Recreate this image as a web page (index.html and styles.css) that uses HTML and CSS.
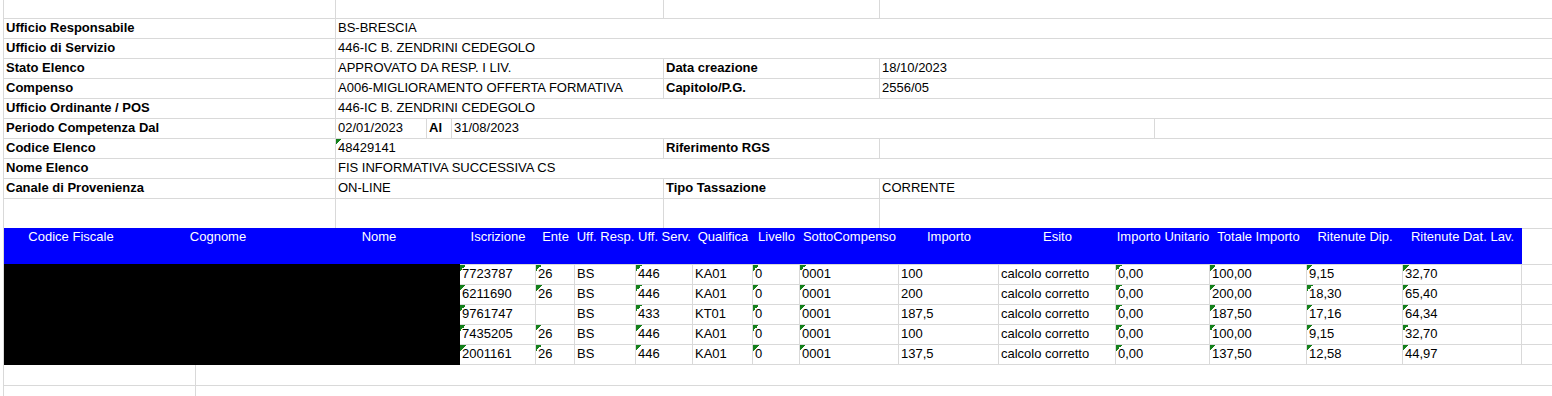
FILE: index.html
```html
<!DOCTYPE html>
<html lang="it">
<head>
<meta charset="utf-8">
<title>Elenco</title>
<link rel="stylesheet" href="styles.css">
</head>
<body>
<div class="sheet">
  <section class="info">
    <div class="row first"><div class="c lab"></div><div class="c val"></div><div class="c lab2"></div><div class="c fill"></div></div>
    <div class="row"><div class="c lab">Ufficio Responsabile</div><div class="c fill">BS-BRESCIA</div></div>
    <div class="row"><div class="c lab">Ufficio di Servizio</div><div class="c fill">446-IC B. ZENDRINI CEDEGOLO</div></div>
    <div class="row"><div class="c lab">Stato Elenco</div><div class="c val">APPROVATO DA RESP. I LIV.</div><div class="c lab2">Data creazione</div><div class="c fill val2">18/10/2023</div></div>
    <div class="row"><div class="c lab">Compenso</div><div class="c val">A006-MIGLIORAMENTO OFFERTA FORMATIVA</div><div class="c lab2">Capitolo/P.G.</div><div class="c fill val2">2556/05</div></div>
    <div class="row"><div class="c lab">Ufficio Ordinante / POS</div><div class="c fill">446-IC B. ZENDRINI CEDEGOLO</div></div>
    <div class="row"><div class="c lab">Periodo Competenza Dal</div><div class="c dal">02/01/2023</div><div class="c al">Al</div><div class="c alv">31/08/2023</div><div class="c fill"></div></div>
    <div class="row"><div class="c lab">Codice Elenco</div><div class="c val t">48429141</div><div class="c lab2">Riferimento RGS</div><div class="c fill"></div></div>
    <div class="row"><div class="c lab">Nome Elenco</div><div class="c fill">FIS INFORMATIVA SUCCESSIVA CS</div></div>
    <div class="row"><div class="c lab">Canale di Provenienza</div><div class="c val">ON-LINE</div><div class="c lab2">Tipo Tassazione</div><div class="c fill val2">CORRENTE</div></div>
    <div class="row spacer"><div class="c lab"></div><div class="c val"></div><div class="c lab2"></div><div class="c fill"></div></div>
  </section>

  <section class="grid">
    <div class="h">Codice Fiscale</div>
    <div class="h">Cognome</div>
    <div class="h">Nome</div>
    <div class="h">Iscrizione</div>
    <div class="h">Ente</div>
    <div class="h">Uff. Resp.</div>
    <div class="h">Uff. Serv.</div>
    <div class="h">Qualifica</div>
    <div class="h">Livello</div>
    <div class="h">SottoCompenso</div>
    <div class="h">Importo</div>
    <div class="h">Esito</div>
    <div class="h">Importo Unitario</div>
    <div class="h">Totale Importo</div>
    <div class="h">Ritenute Dip.</div>
    <div class="h">Ritenute Dat. Lav.</div>
    <div class="hfill"></div>

    <div class="redacted"></div>
    <div class="d t">7723787</div><div class="d t">26</div><div class="d">BS</div><div class="d t">446</div><div class="d">KA01</div><div class="d t">0</div><div class="d t">0001</div><div class="d">100</div><div class="d">calcolo corretto</div><div class="d t">0,00</div><div class="d t">100,00</div><div class="d t">9,15</div><div class="d t">32,70</div><div class="dfill"></div>

    <div class="d t">6211690</div><div class="d t">26</div><div class="d">BS</div><div class="d t">446</div><div class="d">KA01</div><div class="d t">0</div><div class="d t">0001</div><div class="d">200</div><div class="d">calcolo corretto</div><div class="d t">0,00</div><div class="d t">200,00</div><div class="d t">18,30</div><div class="d t">65,40</div><div class="dfill"></div>

    <div class="d t">9761747</div><div class="d"></div><div class="d">BS</div><div class="d t">433</div><div class="d">KT01</div><div class="d t">0</div><div class="d t">0001</div><div class="d">187,5</div><div class="d">calcolo corretto</div><div class="d t">0,00</div><div class="d t">187,50</div><div class="d t">17,16</div><div class="d t">64,34</div><div class="dfill"></div>

    <div class="d t">7435205</div><div class="d t">26</div><div class="d">BS</div><div class="d t">446</div><div class="d">KA01</div><div class="d t">0</div><div class="d t">0001</div><div class="d">100</div><div class="d">calcolo corretto</div><div class="d t">0,00</div><div class="d t">100,00</div><div class="d t">9,15</div><div class="d t">32,70</div><div class="dfill"></div>

    <div class="d last t">2001161</div><div class="d last t">26</div><div class="d last">BS</div><div class="d last t">446</div><div class="d last">KA01</div><div class="d last t">0</div><div class="d last t">0001</div><div class="d last">137,5</div><div class="d last">calcolo corretto</div><div class="d last t">0,00</div><div class="d last t">137,50</div><div class="d last t">12,58</div><div class="d last t">44,97</div><div class="dfill last"></div>
  </section>

  <section class="after">
    <div class="row arow"><div class="c short"></div><div class="c fill"></div></div>
    <div class="row arow2"><div class="c short"></div><div class="c fill"></div></div>
  </section>
</div>
</body>
</html>
```

FILE: styles.css
```css
* { box-sizing: border-box; }

html, body {
  margin: 0;
  padding: 0;
  background: #ffffff;
}

body {
  width: 1552px;
  height: 396px;
  overflow: hidden;
  font-family: "Liberation Sans", Arial, sans-serif;
  font-size: 13px;
  line-height: 17px;
  color: #000000;
}

.sheet {
  margin-left: 3px;
  border-left: 1px solid #d9d9d9;
  min-height: 396px;
}

/* ---------- info block ---------- */
.row {
  display: flex;
  height: 20px;
  border-bottom: 1px solid #d9d9d9;
}

.row.first { height: 19px; }

.row.spacer {
  height: 29px;
  border-bottom: none;
}

.c {
  padding: 0 2px;
  white-space: nowrap;
  overflow: hidden;
}

.lab {
  flex: 0 0 332px;
  border-right: 1px solid #d9d9d9;
  font-weight: bold;
}

.val { flex: 0 0 328px; border-right: 1px solid #d9d9d9; }

.lab2 {
  flex: 0 0 216px;
  border-right: 1px solid #d9d9d9;
  font-weight: bold;
}

.fill { flex: 1 1 auto; }

.dal { flex: 0 0 91px; border-right: 1px solid #d9d9d9; }
.al { flex: 0 0 25px; border-right: 1px solid #d9d9d9; font-weight: bold; }
.alv { flex: 0 0 703px; border-right: 1px solid #d9d9d9; }

/* green "number stored as text" corner marker */
.t {
  background-image: linear-gradient(to bottom right, #13801a 50%, transparent 50%);
  background-repeat: no-repeat;
  background-position: 0 0;
  background-size: 6px 6px;
}

/* ---------- table ---------- */
.grid {
  display: grid;
  grid-template-columns: 134px 160px 162px 76px 39px 61px 57px 60px 47px 99px 100px 117px 94px 97px 96px 119px 1fr;
}

.h {
  height: 36px;
  background: #0000ff;
  color: #ffffff;
  text-align: center;
  padding-top: 1px;
  line-height: 15px;
  white-space: nowrap;
}

.hfill {
  height: 36px;
  border-top: 1px solid #d9d9d9;
}

.redacted {
  grid-column: 1 / span 3;
  grid-row: 2 / span 5;
  background: #000000;
}

.d {
  height: 20px;
  border-top: 1px solid #d9d9d9;
  border-right: 1px solid #d9d9d9;
  padding: 0 2px;
  white-space: nowrap;
  overflow: hidden;
}

.d.last {
  height: 21px;
  border-bottom: 1px solid #d9d9d9;
}

.dfill {
  height: 20px;
  border-top: 1px solid #d9d9d9;
}

.dfill.last {
  height: 21px;
  border-bottom: 1px solid #d9d9d9;
}

/* ---------- below the table ---------- */
.row.arow { height: 21px; }
.row.arow2 { height: 20px; border-bottom: none; }

.short {
  flex: 0 0 192px;
  border-right: 1px solid #d9d9d9;
}
```
